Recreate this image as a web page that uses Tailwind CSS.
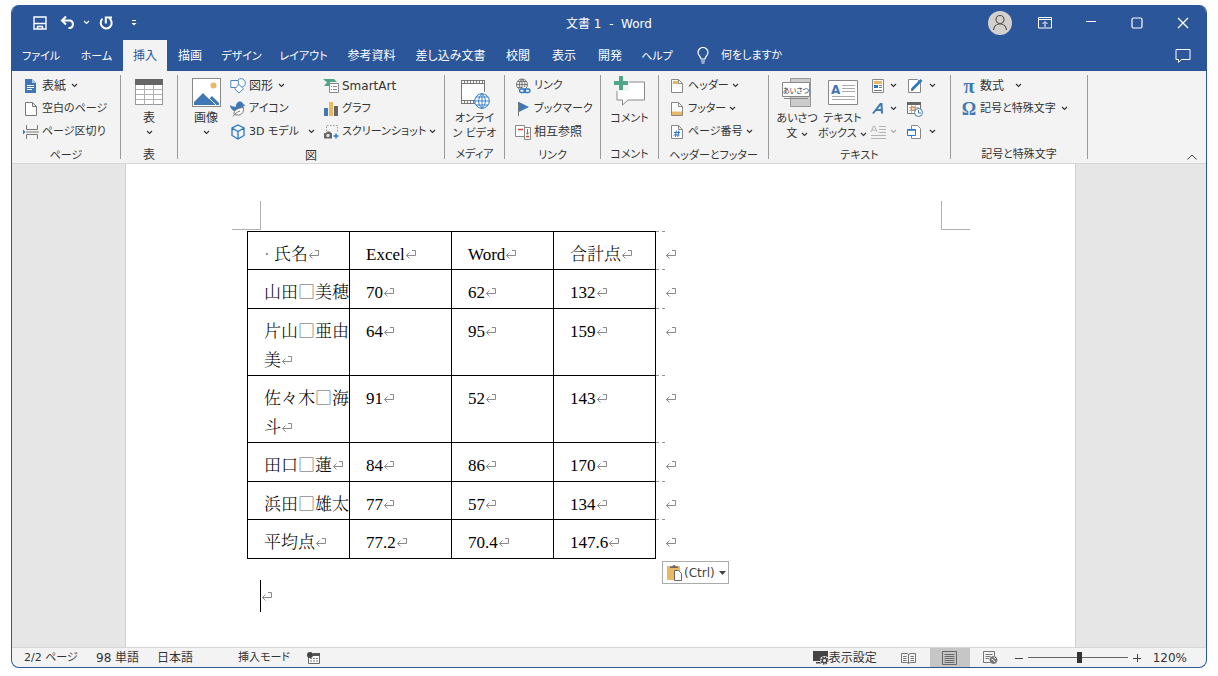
<!DOCTYPE html>
<html lang="ja">
<head>
<meta charset="utf-8">
<title>文書 1 - Word</title>
<script src="https://cdn.jsdelivr.net/npm/@tailwindcss/browser@4"></script>
</head>
<body class="bg-white font-['DejaVu_Sans','Noto_Sans_CJK_JP',sans-serif] text-xs text-[#333] [font-feature-settings:'palt']">
<svg class="hidden" aria-hidden="true">
  <symbol id="chev" viewBox="0 0 7 5"><path d="M1 1l2.500 2.500L6 1" fill="none" stroke="currentColor" stroke-width="1.100"/></symbol>
  <symbol id="ret" viewBox="0 0 12 12"><path d="M7 2.500h3.500v5H1.500M4.500 4.500l-3 3 3 3" fill="none" stroke="#8a8a8a"/></symbol>
</svg>
<div class="flex min-h-screen flex-col px-[11px] pt-[5px] pb-2">
<div class="flex grow flex-col overflow-hidden rounded-lg border-x border-b border-[#2b579a] bg-[#f3f3f3]">

  <!-- title bar -->
  <header class="bg-[#2b579a] text-white">
    <div class="grid h-[35px] grid-cols-[1fr_auto_1fr] items-center">
      <div class="flex items-center pl-5">
        <button aria-label="上書き保存" class="flex w-4 justify-center"><svg class="size-4" viewBox="0 0 16 16" fill="none" stroke="#fff" stroke-width="1.400"><path d="M2 2h12v12H2zM2.500 8.500h11M5.500 14v-2.500h5V14"/></svg></button>
        <button aria-label="元に戻す" class="ml-3 flex w-4 justify-center"><svg class="size-4" viewBox="0 0 16 16" fill="none" stroke="#fff" stroke-width="2"><path d="M6 1.500L2 5.500l4 4M2.500 5.500H10a3.500 3.800 0 0 1 0 7.500H8.500"/></svg></button>
        <button aria-label="元に戻す一覧" class="ml-1 flex w-3 justify-center"><svg class="h-[5px] w-[7px]"><use href="#chev"/></svg></button>
        <button aria-label="繰り返し" class="ml-1.5 flex w-4 justify-center"><svg class="size-4" viewBox="0 0 16 16" fill="none" stroke="#fff" stroke-width="2"><path d="M4.500 3.800a5.500 5.500 0 1 0 7-.3M7.800 8.500V2.500H14"/></svg></button>
        <button aria-label="クイックアクセスのカスタマイズ" class="ml-3 flex w-4 justify-center"><svg class="h-2 w-2" viewBox="0 0 8 8" fill="#fff"><path d="M2 1h4v1H2zM1.500 4h5L4 6.500z"/></svg></button>
      </div>
      <h1 class="whitespace-pre pt-0.5">文書 1  -  Word</h1>
      <div class="flex items-center justify-end">
        <button aria-label="アカウント" class="mr-2.5"><svg class="size-6" viewBox="0 0 24 24"><circle cx="12" cy="12" r="12" fill="#d4d0ce"/><g fill="none" stroke="#555" stroke-width="1.200"><circle cx="12" cy="8.500" r="4"/><path d="M5.500 19c.5-4 3-6 6.500-6s6 2 6.500 6"/></g></svg></button>
        <button aria-label="リボンの表示オプション" class="flex w-[46px] justify-center"><svg class="h-3 w-[14px]" viewBox="0 0 14 12" fill="none" stroke="#fff"><path d="M.5 .5h13v10.500H.5zM.5 2.500h13M7 10V5M4.500 7L7 4.500 9.500 7"/></svg></button>
        <button aria-label="最小化" class="flex w-[46px] justify-center"><svg class="size-3" viewBox="0 0 12 12" stroke="#fff"><path d="M1 4.500h10"/></svg></button>
        <button aria-label="最大化" class="flex w-[46px] justify-center"><svg class="size-3" viewBox="0 0 12 12" fill="none" stroke="#fff" stroke-width="1.200"><rect x="1" y="1" width="10" height="10" rx="1.500"/></svg></button>
        <button aria-label="閉じる" class="flex w-[46px] justify-center"><svg class="size-3" viewBox="0 0 12 12" stroke="#fff" stroke-width="1.300"><path d="M1 1l10 10M11 1L1 11"/></svg></button>
      </div>
    </div>
    <nav class="flex h-[31px] items-stretch whitespace-nowrap">
      <button class="w-[58px] pt-1 text-[11px]">ファイル</button>
      <button class="w-[53px] pt-1 text-[11px]">ホーム</button>
      <button class="w-11 bg-[#f3f3f3] text-[#2b579a]">挿入</button>
      <button class="w-[46px]">描画</button>
      <button class="w-[57px] pt-1 text-[11px]">デザイン</button>
      <button class="w-[67px] pt-1 text-[11px]">レイアウト</button>
      <button class="w-[69px]">参考資料</button>
      <button class="w-[89px]">差し込み文書</button>
      <button class="w-[46px]">校閲</button>
      <button class="w-[46px]">表示</button>
      <button class="w-[46px]">開発</button>
      <button class="w-12 pt-1 text-[11px]">ヘルプ</button>
      <button class="ml-4 flex items-center gap-3 text-[11px]"><svg class="h-[17px] w-3" viewBox="0 0 12 17" fill="none" stroke="#fff" stroke-width="1.200"><path d="M4 12c0-2.500-3-3.500-3-6.500a5 5 0 0 1 10 0C11 8.500 8 9.500 8 12zM4 14h4M4.500 16h3"/></svg><span class="pt-0.5">何をしますか</span></button>
      <button aria-label="コメント" class="mr-[15px] ml-auto"><svg class="h-[14px] w-4" viewBox="0 0 16 14" fill="none" stroke="#fff"><path d="M1 .5h14v10H6.500L3.500 13.500v-3H1z"/></svg></button>
    </nav>
  </header>

  <!-- ribbon -->
  <section class="flex h-[93px] border-b border-[#d6d6d6] pt-[3px] leading-4 whitespace-nowrap">
    <div class="flex w-[108px] flex-col">
      <div class="flex h-[69px] flex-col pl-[11px]">
        <button class="flex h-[23px] items-center gap-[3px]"><svg class="size-4" viewBox="0 0 16 16"><path d="M2 1h7l4 4v10H2z" fill="#3f78b4"/><path d="M9 1v4h4" fill="#a9c6e2"/><path d="M4 7.500h7M4 9.500h7M4 11.500h5" stroke="#fff"/></svg>表紙<svg class="ml-0.5 h-[5px] w-[7px]"><use href="#chev"/></svg></button>
        <button class="flex h-[23px] items-center gap-[3px] text-[11px]"><svg class="size-4" viewBox="0 0 16 16" fill="#fff" stroke="#777"><path d="M2.500 1.500h7l4 4v9h-11zM9.500 1.500v4h4"/></svg>空白のページ</button>
        <button class="flex h-[23px] items-center gap-[3px] text-[11px]"><svg class="size-4" viewBox="0 0 16 16" fill="none" stroke="#777"><path d="M3.500 1v4.500h11V1M3.500 15v-4.500h11V15M3 8h13"/><path d="M0 5.500L2.500 8 0 10.500z" fill="#2b78c4" stroke="none"/></svg>ページ区切り</button>
      </div>
      <p class="mt-[5px] text-center text-[11px]">ページ</p>
    </div>
    <div class="my-px mb-1 w-px bg-[#9b9b9b]"></div>
    <div class="flex w-14 flex-col">
      <button class="flex h-[69px] flex-col items-center pt-[5px]"><svg class="h-[26px] w-7" viewBox="0 0 28 26"><rect x=".5" y=".5" width="27" height="25" fill="#fff" stroke="#999"/><path d="M0 0h28v6H0z" fill="#666"/><path d="M1 10.500h26M1 15.500h26M1 20.500h26M9.500 6v20M18.500 6v20" stroke="#b0b0b0"/></svg><span class="mt-[5px]">表</span><svg class="mt-1 h-[5px] w-[7px]"><use href="#chev"/></svg></button>
      <p class="mt-[5px] text-center">表</p>
    </div>
    <div class="my-px mb-1 w-px bg-[#9b9b9b]"></div>
    <div class="flex w-[266px] flex-col">
      <div class="flex h-[69px]">
        <button class="flex w-[52px] flex-col items-center pt-1 pl-1"><svg class="size-[29px]" viewBox="0 0 29 29"><rect x=".5" y=".5" width="28" height="28" fill="#fff" stroke="#888"/><circle cx="21.500" cy="7.500" r="3" fill="#eab765"/><path d="M2 27v-3l9-9 6 6 3-3 7 7v2z" fill="#3f78b4"/><path d="M14.500 17.500L24 27" stroke="#fff"/></svg><span class="mt-[3px]">画像</span><svg class="mt-1 h-[5px] w-[7px]"><use href="#chev"/></svg></button>
        <div class="w-[93px]">
          <button class="flex h-[23px] items-center gap-[3px]"><svg class="size-4" viewBox="0 0 16 16" fill="#fff" stroke="#4a86c0"><circle cx="11" cy="5" r="4.300"/><path d="M.8 2.500h7.500v7H.8z"/><path d="M9 6.500l4.500 4.300L9 15l-4.300-4.200z"/></svg>図形<svg class="ml-0.5 h-[5px] w-[7px]"><use href="#chev"/></svg></button>
          <button class="flex h-[23px] items-center gap-[3px] text-[11px]"><svg class="size-4" viewBox="0 0 16 16"><path d="M0 4c2 1.500 4 2 6 1.500C6 2 8 .5 10 .5S13 2 13.200 3.200L15.500 4l-2.300 1.500C13 8 12 9 10 9L4 10C2 9 0 7 0 4z" fill="#3f78b4"/><path d="M4 13.500C3.500 9.500 7 7 13.500 6.500 14 12 11 15.500 5 13.500M3 15.500c2-3 4-4.500 7-5.500" fill="#fff" stroke="#777"/></svg>アイコン</button>
          <button class="flex h-[23px] items-center gap-[3px] text-[11px]"><svg class="size-4" viewBox="0 0 16 16" fill="none" stroke="#2878c8" stroke-width="1.300"><path d="M8 1l6 3v7.500L8 15l-6-3.500V4zM2 4l6 3.500L14 4M8 7.500V15"/></svg>3D モデル<svg class="ml-1.5 h-[5px] w-[7px]"><use href="#chev"/></svg></button>
        </div>
        <div>
          <button class="flex h-[23px] items-center gap-[3px]"><svg class="size-4" viewBox="0 0 16 16"><path d="M0 1h11l3 3H7v4H1l3-3.500z" fill="#4fa585"/><path d="M6.500 5.500h9v9h-9z" fill="#fff" stroke="#888"/><path d="M8 8.500h1m1 0h4M8 11.500h1m1 0h4" stroke="#888"/></svg>SmartArt</button>
          <button class="flex h-[23px] items-center gap-[3px] text-[11px]"><svg class="size-4" viewBox="0 0 16 16"><path d="M1 7h4v8H1z" fill="#3f78b4"/><path d="M6 1h4v14H6z" fill="#eab765"/><path d="M11 5h4v10h-4z" fill="#666"/></svg>グラフ</button>
          <button class="flex h-[23px] items-center gap-[3px] text-[11px]"><svg class="size-4" viewBox="0 0 16 16"><path d="M3.500 7V1.500h11V9" fill="none" stroke="#999" stroke-dasharray="1.500 1.500"/><path d="M1 9h2l1-1.500h3L8 9h1v5.500H1z" fill="#666"/><circle cx="5" cy="11.500" r="1.700" fill="#ddd"/><path d="M13 9.500v5M10.500 12h5" stroke="#2b78c4" stroke-width="1.500"/></svg>スクリーンショット<svg class="h-[5px] w-[7px]"><use href="#chev"/></svg></button>
        </div>
      </div>
      <p class="mt-[5px] text-center">図</p>
    </div>
    <div class="my-px mb-1 w-px bg-[#9b9b9b]"></div>
    <div class="flex w-[59px] flex-col">
      <button class="flex h-[69px] flex-col items-center pt-[5px] text-[11px] leading-[15px]"><svg class="mb-0.5 h-[30px] w-[30px] shrink-0" viewBox="0 0 30 30"><path d="M1 1h24v23H1z" fill="#fff"/><path d="M1 1.500h24M1 4.500h24M1 21.500h14M1 24.500h14M1.500 1v24M24.500 1v12" stroke="#777"/><path d="M1 3h24M1 23h14" stroke="#777" stroke-width="3" stroke-dasharray="1 2"/><circle cx="22" cy="22" r="7.300" fill="#fff" stroke="#2b78c4"/><path d="M14.700 22h14.600M16 18h12M16 26h12M22 14.700v14.600M22 14.700c-4.500 4-4.500 10.600 0 14.600 4.500-4 4.500-10.600 0-14.600" fill="none" stroke="#2b78c4" stroke-width=".9"/></svg><span>オンライ<br>ン ビデオ</span></button>
      <p class="mt-[5px] text-center text-[11px]">メディア</p>
    </div>
    <div class="my-px mb-1 w-px bg-[#9b9b9b]"></div>
    <div class="flex w-[95px] flex-col">
      <div class="h-[69px] pl-2.5">
        <button class="flex h-[23px] items-center gap-[3px] text-[11px]"><svg class="size-4" viewBox="0 0 16 16" fill="none"><g stroke="#777"><circle cx="7" cy="6.500" r="5.500"/><path d="M1.500 6.500h11M2.500 3.500h9M2.500 9.500h5M7 1v11M7 1C3.500 4 3.500 9 7 12M7 1c3 2.500 3.500 5 2.500 8"/></g><path d="M5 10.500h11v5H5z" fill="#f3f3f3"/><g stroke="#2b78c4" stroke-width="1.400"><rect x="4.500" y="11" width="6" height="3.500" rx="1.700"/><rect x="9" y="11" width="6" height="3.500" rx="1.700"/></g></svg>リンク</button>
        <button class="flex h-[23px] items-center gap-[3px] text-[11px]"><svg class="size-4" viewBox="0 0 16 16"><path d="M4 1l10 5-10 5z" fill="#3f78b4"/><path d="M3.500 1v14" stroke="#777"/></svg>ブックマーク</button>
        <button class="flex h-[23px] items-center gap-[3px]"><svg class="size-4" viewBox="0 0 16 16"><path d="M.5 1.500h9v11h-9zM9.500 3.500h6v12h-6z" fill="#fff" stroke="#888"/><path d="M3 5.500h5M11 12.500h3" stroke="#d0443c" stroke-width="1.600"/><path d="M12.500 5v5M10.800 8.500l1.700 1.700 1.700-1.700" fill="none" stroke="#777"/></svg>相互参照</button>
      </div>
      <p class="mt-[5px] text-center text-[11px]">リンク</p>
    </div>
    <div class="my-px mb-1 w-px bg-[#9b9b9b]"></div>
    <div class="flex w-[57px] flex-col">
      <button class="flex h-[69px] flex-col items-center pt-0.5 text-[11px]"><svg class="h-[31px] w-8" viewBox="0 0 32 31"><path d="M3 6h27.500v18H14l-5.500 5v-5H3z" fill="#fff" stroke="#888"/><path d="M0 0h15v15H0z" fill="#f3f3f3"/><path d="M5 0h4v5h5v4H9v5H5V9H0V5h5z" fill="#4fa585"/></svg><span class="mt-1">コメント</span></button>
      <p class="mt-[5px] text-center text-[11px]">コメント</p>
    </div>
    <div class="my-px mb-1 w-px bg-[#9b9b9b]"></div>
    <div class="flex w-[109px] flex-col">
      <div class="h-[69px] pl-2.5">
        <button class="flex h-[23px] items-center gap-[3px] text-[11px]"><svg class="size-4" viewBox="0 0 16 16"><path d="M2.500 1.500h7l4 4v9h-11z" fill="#fff" stroke="#888"/><path d="M4 3h5v3H4z" fill="#eab765"/><path d="M9.500 1.500v4h4" fill="none" stroke="#888"/></svg>ヘッダー<svg class="h-[5px] w-[7px]"><use href="#chev"/></svg></button>
        <button class="flex h-[23px] items-center gap-[3px] text-[11px]"><svg class="size-4" viewBox="0 0 16 16"><path d="M2.500 1.500h7l4 4v9h-11z" fill="#fff" stroke="#888"/><path d="M3 10.500h10v3.500H3z" fill="#eab765"/><path d="M9.500 1.500v4h4" fill="none" stroke="#888"/></svg>フッター<svg class="h-[5px] w-[7px]"><use href="#chev"/></svg></button>
        <button class="flex h-[23px] items-center gap-[3px] text-[11px]"><svg class="size-4" viewBox="0 0 16 16"><path d="M2.500 1.500h7l4 4v9h-11zM9.500 1.500v4h4" fill="#fff" stroke="#888"/><path d="M5 8.500h6M4.500 11h6M7.300 6.500l-.8 6.500M9.700 6.500l-.8 6.500" stroke="#2b78c4"/></svg>ページ番号<svg class="h-[5px] w-[7px]"><use href="#chev"/></svg></button>
      </div>
      <p class="mt-[5px] text-center text-[11px]">ヘッダーとフッター</p>
    </div>
    <div class="my-px mb-1 w-px bg-[#9b9b9b]"></div>
    <div class="flex w-[181px] flex-col">
      <div class="flex h-[69px]">
        <button class="ml-1.5 flex w-11 flex-col items-center pt-1 text-[11px] leading-[15px]"><svg class="mb-0.5 h-[31px] w-[30px] shrink-0" viewBox="0 0 30 31"><path d="M8.500.5h20v28h-20z" fill="#ccc" stroke="#999"/><path d="M.5 4.500h27v14H.5zM2 20.500h24" fill="#fff" stroke="#888"/><text x="14" y="14.500" text-anchor="middle" font-size="7" fill="#333">あいさつ</text></svg><span>あいさつ<br>文 <svg class="inline h-[5px] w-[7px]"><use href="#chev"/></svg></span></button>
        <button class="flex w-[47px] flex-col items-center pt-1 text-[11px] leading-[15px]"><svg class="mb-0.5 h-[31px] w-[30px] shrink-0" viewBox="0 0 30 31"><path d="M.5 2.500h29v24H.5z" fill="#fff" stroke="#888"/><text x="3" y="16" font-size="12" font-weight="bold" fill="#3f78b4">A</text><path d="M14 7.500h13M14 10.500h13M14 13.500h13M4 18.500h23M4 21.500h23" stroke="#aaa"/></svg><span>テキスト<br>ボックス <svg class="inline h-[5px] w-[7px]"><use href="#chev"/></svg></span></button>
        <div class="ml-1 w-[37px]">
          <button aria-label="クイックパーツ" class="flex h-[23px] items-center gap-1"><svg class="size-4" viewBox="0 0 16 16"><path d="M2.500 1.500h11v13h-11z" fill="#fff" stroke="#888"/><path d="M4 3h8v3H4z" fill="#eab765"/><path d="M4 7h4v3H4z" fill="#2b78c4"/><path d="M9 7.500h3M9 9.500h3M4 12.500h8" stroke="#777"/></svg><svg class="h-[5px] w-[7px]"><use href="#chev"/></svg></button>
          <button aria-label="ワードアート" class="flex h-[23px] items-center gap-1"><svg class="size-4" viewBox="0 0 16 16"><path d="M3 12.500L10.500 3h1l.5 9.500M6 9h6" fill="none" stroke="#3f78b4" stroke-width="2"/></svg><svg class="h-[5px] w-[7px]"><use href="#chev"/></svg></button>
          <button aria-label="ドロップキャップ" class="flex h-[23px] items-center gap-1 text-[#aaa]"><svg class="size-4" viewBox="0 0 16 16" fill="none" stroke="#b5b5b5"><path d="M1 8l2.500-6h1L7 8M2 6h4M9 2.500h7M9 5.500h7M9 8.500h7M1 11.500h15M1 14.500h15"/></svg><svg class="h-[5px] w-[7px]"><use href="#chev"/></svg></button>
        </div>
        <div>
          <button aria-label="署名欄" class="flex h-[23px] items-center gap-1.5"><svg class="size-4" viewBox="0 0 16 16"><path d="M1.500 1.500h9l3 3v10h-12z" fill="#fff" stroke="#888"/><path d="M5 11.500L14.500 2" stroke="#2b78c4" stroke-width="2.600"/><path d="M4 13l.5-2.500 2 2z" fill="#555"/></svg><svg class="h-[5px] w-[7px]"><use href="#chev"/></svg></button>
          <button aria-label="日付と時刻" class="flex h-[23px] items-center"><svg class="size-4" viewBox="0 0 16 16"><path d="M.5 1.500h13v11H.5z" fill="#fff" stroke="#777"/><path d="M0 1h14v3H0z" fill="#666"/><path d="M2 6.500h10M2 9.500h7M4.500 4v8M8.500 4v7" stroke="#bbb"/><path d="M4 6h4v3H4z" fill="none" stroke="#e07b39"/><circle cx="11.500" cy="11.500" r="4" fill="#fff" stroke="#3f78b4"/><path d="M11.500 9v3H14" fill="none" stroke="#3f78b4"/></svg></button>
          <button aria-label="オブジェクト" class="flex h-[23px] items-center gap-1.5"><svg class="size-4" viewBox="0 0 16 16"><path d="M4.500 1.500h6l3 3v10h-9z" fill="#fff" stroke="#888"/><path d="M.5 5.500h8v6h-8z" fill="#fff" stroke="#2b78c4"/><path d="M.5 6h8" stroke="#2b78c4" stroke-width="1.500"/></svg><svg class="h-[5px] w-[7px]"><use href="#chev"/></svg></button>
        </div>
      </div>
      <p class="mt-[5px] text-center text-[11px]">テキスト</p>
    </div>
    <div class="my-px mb-1 w-px bg-[#9b9b9b]"></div>
    <div class="flex w-[136px] flex-col">
      <div class="h-[69px] pl-2.5">
        <button class="flex h-[23px] items-center gap-[3px]"><span class="w-4 text-center font-['Liberation_Serif'] text-xl leading-4 font-bold text-[#3f78b4]">π</span>数式<svg class="ml-2 h-[5px] w-[7px]"><use href="#chev"/></svg></button>
        <button class="flex h-[23px] items-center gap-[3px] text-[11px]"><span class="w-4 text-center font-['Liberation_Serif'] text-lg leading-4 font-bold text-[#3f78b4]">Ω</span>記号と特殊文字<svg class="ml-0.5 h-[5px] w-[7px]"><use href="#chev"/></svg></button>
      </div>
      <p class="mt-[5px] text-center text-[11px]">記号と特殊文字</p>
    </div>
    <div class="my-px mb-1 w-px bg-[#9b9b9b]"></div>
    <button aria-label="リボンを折りたたむ" class="mr-[9px] mb-[3px] ml-auto self-end"><svg class="h-[6px] w-[10px]" viewBox="0 0 10 6" fill="none" stroke="#444"><path d="M.5 5.500L5 1l4.500 4.500"/></svg></button>
  </section>

  <!-- document -->
  <main class="flex grow bg-[#e6e6e6]">
    <div class="relative mr-[130px] ml-[113px] grow border-x border-[#d0d0d0] bg-white pt-[37px] font-['Liberation_Serif','Noto_Serif_CJK_JP','Noto_Sans_CJK_JP',serif] text-[17px] leading-[29px] font-light text-black [font-feature-settings:normal]">
      <div class="flex justify-between pr-[105px] pl-[106px]">
        <div class="size-[29px] border-r border-b border-[#b0b0b0]"></div>
        <div class="size-[29px] border-b border-l border-[#b0b0b0]"></div>
      </div>
      <table class="mt-px ml-[121px] w-[432px] table-fixed border-collapse whitespace-nowrap [&_svg]:inline [&_svg]:size-3 [&_svg]:align-baseline [&_th]:font-light [&_tr>*]:p-0 [&_tr>*]:text-left [&_tr>*]:align-top [&_tr>*:nth-child(-n+4)]:border [&_tr>*:nth-child(-n+4)]:border-black [&_tr>*:nth-child(-n+4)]:pl-4 [&_tr>*]:pt-2 [&_tr>*]:overflow-hidden [&_tr>*:nth-child(5)]:border-t [&_tr>*:nth-child(5)]:border-dashed [&_tr>*:nth-child(5)]:border-t-[#999] [&_i]:font-['Noto_Sans_CJK_JP'] [&_i]:leading-none [&_i]:not-italic [&_i]:text-[#555]">
        <colgroup><col class="w-[102px]"><col class="w-[102px]"><col class="w-[102px]"><col class="w-[102px]"><col class="w-[9px]"><col></colgroup>
        <tr class="h-[38px]"><th scope="col"><span class="text-[#777]">·</span> 氏名<svg><use href="#ret"/></svg></th><th scope="col">Excel<svg><use href="#ret"/></svg></th><th scope="col">Word<svg><use href="#ret"/></svg></th><th scope="col">合計点<svg><use href="#ret"/></svg></th><td></td><td><svg><use href="#ret"/></svg></td></tr>
        <tr class="h-[39px]"><td>山田<i>□</i>美穂</td><td>70<svg><use href="#ret"/></svg></td><td>62<svg><use href="#ret"/></svg></td><td>132<svg><use href="#ret"/></svg></td><td></td><td><svg><use href="#ret"/></svg></td></tr>
        <tr class="h-[67px]"><td>片山<i>□</i>亜由<br>美<svg><use href="#ret"/></svg></td><td>64<svg><use href="#ret"/></svg></td><td>95<svg><use href="#ret"/></svg></td><td>159<svg><use href="#ret"/></svg></td><td></td><td><svg><use href="#ret"/></svg></td></tr>
        <tr class="h-[67px]"><td>佐々木<i>□</i>海<br>斗<svg><use href="#ret"/></svg></td><td>91<svg><use href="#ret"/></svg></td><td>52<svg><use href="#ret"/></svg></td><td>143<svg><use href="#ret"/></svg></td><td></td><td><svg><use href="#ret"/></svg></td></tr>
        <tr class="h-[39px]"><td>田口<i>□</i>蓮<svg><use href="#ret"/></svg></td><td>84<svg><use href="#ret"/></svg></td><td>86<svg><use href="#ret"/></svg></td><td>170<svg><use href="#ret"/></svg></td><td></td><td><svg><use href="#ret"/></svg></td></tr>
        <tr class="h-[38px]"><td>浜田<i>□</i>雄太</td><td>77<svg><use href="#ret"/></svg></td><td>57<svg><use href="#ret"/></svg></td><td>134<svg><use href="#ret"/></svg></td><td></td><td><svg><use href="#ret"/></svg></td></tr>
        <tr class="h-[39px]"><td>平均点<svg><use href="#ret"/></svg></td><td>77.2<svg><use href="#ret"/></svg></td><td>70.4<svg><use href="#ret"/></svg></td><td>147.6<svg><use href="#ret"/></svg></td><td></td><td><svg><use href="#ret"/></svg></td></tr>
      </table>
      <div class="mt-[21px] ml-[134px] flex h-8 items-center border-l border-black"><svg class="size-3"><use href="#ret"/></svg></div>
      <button class="absolute top-[397px] left-[536px] flex h-[23px] w-[67px] items-center border border-[#ababab] bg-white pl-[3px] font-['DejaVu_Sans'] text-xs font-normal text-[#444]"><svg class="mr-px size-[17px]" viewBox="0 0 17 17"><path d="M1 2h13v14H1z" fill="#eab765"/><path d="M4 4V2.500h2.500a1.500 1.500 0 0 1 3 0H12V4z" fill="#666"/><path d="M8.500 6.500h4l3 3v7h-7z" fill="#fff" stroke="#666"/></svg>(Ctrl)<svg class="ml-1 h-1 w-[7px]" viewBox="0 0 7 4" fill="#444"><path d="M0 0h7L3.500 4z"/></svg></button>
    </div>
  </main>

  <!-- status bar -->
  <footer class="flex h-5 items-center border-t border-[#d6d6d6] whitespace-nowrap">
    <span class="w-[72px] pt-0.5 pl-3 text-[11px]">2/2 ページ</span>
    <span class="ml-3">98 単語</span>
    <span class="ml-[18px]">日本語</span>
    <span class="ml-[45px] pt-0.5 text-[11px]">挿入モード</span>
    <svg class="ml-[17px] h-3 w-[13px]" viewBox="0 0 13 12"><path d="M1.500 2.500h11v9h-11z" fill="#fff" stroke="#666"/><path d="M6 1h7v3H6z" fill="#555"/><circle cx="3" cy="3" r="3" fill="#444"/><path d="M3 6.500h8M3 9h8" stroke="#777" stroke-dasharray="2 1"/></svg>
    <button class="mr-[24px] ml-auto flex items-center"><svg class="h-[15px] w-4" viewBox="0 0 16 15"><path d="M0 1h15v10H0zM3 12h5v1.500H3z" fill="#444"/><circle cx="11.500" cy="10.500" r="4.500" fill="#f3f3f3"/><circle cx="11.500" cy="10.500" r="2.200" fill="none" stroke="#444" stroke-width="1.400"/><circle cx="11.500" cy="10.500" r="3.500" fill="none" stroke="#444" stroke-width="1.300" stroke-dasharray="1.500 1.250"/></svg>表示設定</button>
    <button aria-label="閲覧モード" class="mr-[14px]"><svg class="h-3 w-[15px]" viewBox="0 0 15 12" fill="none" stroke="#777"><path d="M.5 1.500h5.500l1.500 1 1.500-1h5.500v9H9l-1.500 1-1.500-1H.5zM7.500 2v9.500M2 4.500h3.500M2 6.500h3.500M2 8.500h3.500M9.500 4.500H13M9.500 6.500H13M9.500 8.500H13"/></svg></button>
    <button aria-label="印刷レイアウト" class="flex h-5 w-10 items-center justify-center bg-[#c6c6c6]"><svg class="h-[14px] w-[15px]" viewBox="0 0 15 14" fill="none" stroke="#666"><path d="M.5.5h14v13H.5zM2.500 3.500h10M2.500 5.500h10M2.500 7.500h10M2.500 9.500h10M2.500 11.500h10" /></svg></button>
    <button aria-label="Webレイアウト" class="ml-[13px]"><svg class="h-[13px] w-[15px]" viewBox="0 0 15 13" fill="none" stroke="#777"><path d="M7 11.500H.5V.5h11V5M2.500 3.500h7M2.500 5.500h5M2.500 7.500h4"/><circle cx="10.500" cy="9" r="3.500" fill="#777"/><path d="M8.500 8l2 1 1.500 2M11 6l1.500 2" stroke="#f3f3f3"/></svg></button>
    <button aria-label="縮小" class="ml-[17px]"><svg class="size-2" viewBox="0 0 8 8" stroke="#444"><path d="M0 4.500h8"/></svg></button>
    <input type="range" aria-label="ズーム" min="0" max="100" value="52" class="mx-[5px] h-3 w-[100px] appearance-none bg-[linear-gradient(#666,#666)] bg-[length:100%_1px] bg-center bg-no-repeat [&::-webkit-slider-thumb]:h-[11px] [&::-webkit-slider-thumb]:w-[5px] [&::-webkit-slider-thumb]:appearance-none [&::-webkit-slider-thumb]:bg-[#333]">
    <button aria-label="拡大"><svg class="size-2" viewBox="0 0 8 8" stroke="#444"><path d="M0 4.500h8M4.500 0v8"/></svg></button>
    <button class="mr-[19px] ml-3">120%</button>
  </footer>
</div>
</div>
</body>
</html>
